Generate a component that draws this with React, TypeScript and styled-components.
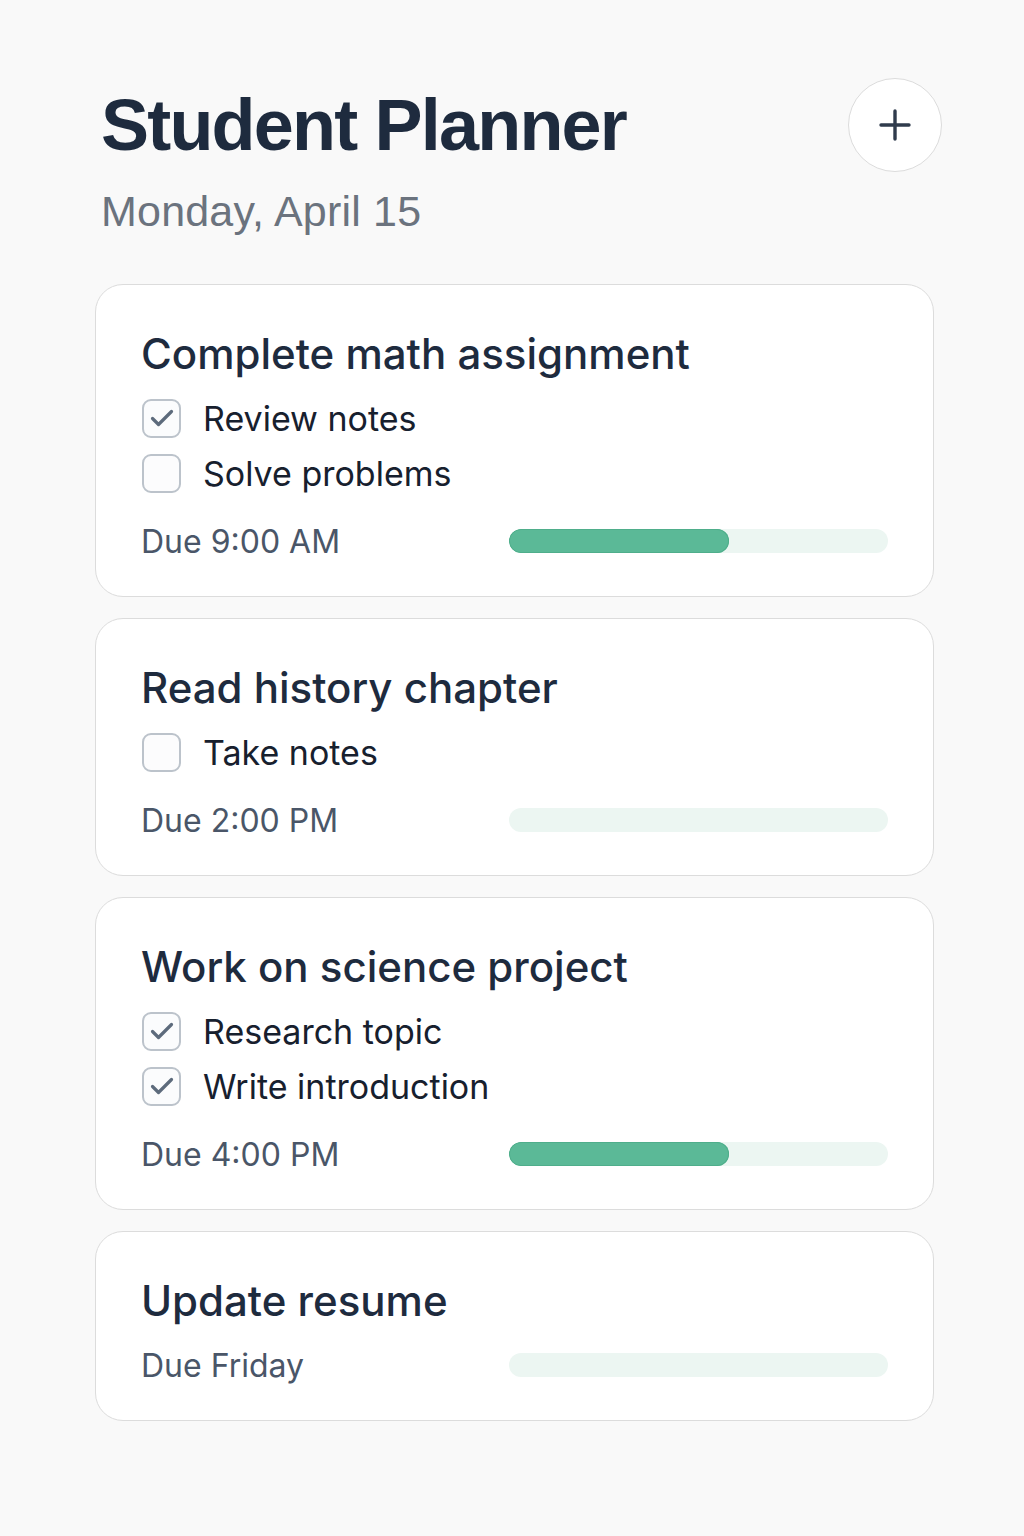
import React from "react";
import styled, { createGlobalStyle } from "styled-components";

const GlobalStyle = createGlobalStyle`
  html, body {
    margin: 0;
    padding: 0;
    background: #f9f9f9;
  }
  body {
    font-family: Inter, "Liberation Sans", sans-serif;
    color: #1e293b;
  }
`;

const Page = styled.main`
  box-sizing: border-box;
  width: 1024px;
  min-height: 1536px;
  padding: 78px 90px 80px 95px;
  background: #f9f9f9;
`;

const Header = styled.header`
  display: flex;
  justify-content: space-between;
  align-items: flex-start;
  padding-left: 6px;
  margin-bottom: 48px;
`;

const TitleBlock = styled.div`
  display: flex;
  flex-direction: column;
`;

const Title = styled.h1`
  margin: 0;
  font-family: "Liberation Sans", Arial, sans-serif;
  font-weight: 700;
  font-size: 72px;
  line-height: 94px;
  letter-spacing: -1.8px;
  color: #1e2b3e;
`;

const Subtitle = styled.p`
  margin: 14px 0 0;
  font-family: "Liberation Sans", Arial, sans-serif;
  font-size: 43px;
  line-height: 50px;
  letter-spacing: 0.2px;
  color: #6b737e;
`;

const AddButton = styled.button`
  width: 94px;
  height: 94px;
  margin-right: -8px;
  border-radius: 50%;
  border: 1.5px solid #dcdcdc;
  background: #fff;
  display: flex;
  align-items: center;
  justify-content: center;
  padding: 0;
  cursor: pointer;
`;

const Cards = styled.section`
  display: flex;
  flex-direction: column;
  gap: 21px;
`;

const Card = styled.article`
  box-sizing: border-box;
  background: #fff;
  border: 1.5px solid #dcdcdc;
  border-radius: 28px;
  padding: 45px 45px 35px 45px;
  display: flex;
  flex-direction: column;
  gap: 20px;
`;

const CardTitle = styled.h2`
  margin: 0;
  font-weight: 500;
  font-size: 42px;
  line-height: 48px;
  letter-spacing: 0;
  color: #1e2b3e;
`;

const SubtaskList = styled.ul`
  list-style: none;
  margin: 0 0 8px;
  padding: 0;
  display: flex;
  flex-direction: column;
  gap: 15px;
`;

const Subtask = styled.li`
  display: flex;
  align-items: center;
  gap: 22px;
  height: 40px;
  font-size: 34px;
  color: #17202e;
`;

const Box = styled.span<{ $checked: boolean }>`
  box-sizing: border-box;
  width: 39px;
  height: 39px;
  flex: none;
  margin-left: 1px;
  border: 2px solid #bcc3cb;
  border-radius: 9px;
  background: ${(p) => (p.$checked ? "#fbfcfd" : "#fcfcfd")};
  display: flex;
  align-items: center;
  justify-content: center;
`;

const Footer = styled.div`
  display: flex;
  align-items: center;
  justify-content: space-between;
  height: 40px;
`;

const Due = styled.span`
  font-size: 32px;
  color: #4a5668;
`;

const Track = styled.div`
  width: 379px;
  height: 24px;
  border-radius: 12px;
  background: #ecf6f2;
  overflow: hidden;
`;

const Fill = styled.div`
  height: 100%;
  border-radius: 12px;
  background: #5bb997;
  box-shadow: inset 0 0 0 1px #4fae8b;
`;

type Task = {
  title: string;
  subtasks: { label: string; done: boolean }[];
  due: string;
  progress: number;
};

const tasks: Task[] = [
  {
    title: "Complete math assignment",
    subtasks: [
      { label: "Review notes", done: true },
      { label: "Solve problems", done: false },
    ],
    due: "Due 9:00 AM",
    progress: 58,
  },
  {
    title: "Read history chapter",
    subtasks: [{ label: "Take notes", done: false }],
    due: "Due 2:00 PM",
    progress: 0,
  },
  {
    title: "Work on science project",
    subtasks: [
      { label: "Research topic", done: true },
      { label: "Write introduction", done: true },
    ],
    due: "Due 4:00 PM",
    progress: 58,
  },
  {
    title: "Update resume",
    subtasks: [],
    due: "Due Friday",
    progress: 0,
  },
];

const Check = () => (
  <svg width="26" height="26" viewBox="0 0 26 26" fill="none">
    <path
      d="M3.5 13.5l6 6L22.5 6.5"
      stroke="#5d6b7c"
      strokeWidth="3.2"
      strokeLinecap="round"
      strokeLinejoin="round"
    />
  </svg>
);

const Plus = () => (
  <svg width="32" height="32" viewBox="0 0 32 32" fill="none">
    <path
      d="M16 2v28M2 16h28"
      stroke="#2f3b4c"
      strokeWidth="3.4"
      strokeLinecap="round"
    />
  </svg>
);

export default function App() {
  return (
    <>
      <GlobalStyle />
      <Page>
        <Header>
          <TitleBlock>
            <Title>Student Planner</Title>
            <Subtitle>Monday, April 15</Subtitle>
          </TitleBlock>
          <AddButton aria-label="Add task">
            <Plus />
          </AddButton>
        </Header>
        <Cards>
          {tasks.map((t) => (
            <Card key={t.title}>
              <CardTitle>{t.title}</CardTitle>
              {t.subtasks.length > 0 && (
                <SubtaskList>
                  {t.subtasks.map((s) => (
                    <Subtask key={s.label}>
                      <Box $checked={s.done}>{s.done && <Check />}</Box>
                      {s.label}
                    </Subtask>
                  ))}
                </SubtaskList>
              )}
              <Footer>
                <Due>{t.due}</Due>
                <Track>
                  {t.progress > 0 && <Fill style={{ width: `${t.progress}%` }} />}
                </Track>
              </Footer>
            </Card>
          ))}
        </Cards>
      </Page>
    </>
  );
}
